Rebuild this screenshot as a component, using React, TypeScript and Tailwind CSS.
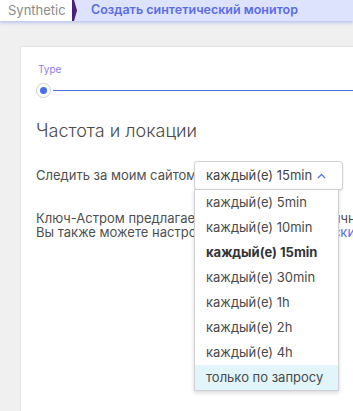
import React from "react";

const items = [
  { label: "каждый(е) 5min" },
  { label: "каждый(е) 10min" },
  { label: "каждый(е) 15min", bold: true },
  { label: "каждый(е) 30min" },
  { label: "каждый(е) 1h" },
  { label: "каждый(е) 2h" },
  { label: "каждый(е) 4h" },
  { label: "только по запросу", hl: true },
];

export default function App() {
  return (
    <div className="w-[353px] h-[411px] overflow-hidden bg-[#f0f0f0] font-['Inter',sans-serif] flex flex-col">
      <div className="relative z-10 flex h-[21px] shrink-0 items-stretch bg-[#dde3fd] shadow-[0_2px_3px_rgba(100,120,235,0.35)]">
        <div className="flex w-[72px] items-center bg-white pl-2 text-[13px] text-[#8a8a8a] leading-none">Synthetic</div>
        <svg width="6" height="21" viewBox="0 0 6 21" className="shrink-0">
          <polygon points="0,0 2,0 5,10.5 2,21 0,21" fill="#4b1f7c" />
        </svg>
        <div className="flex items-center pl-[13px] text-[12.5px] font-semibold text-[#5a6ce4] leading-none whitespace-nowrap">
          Создать синтетический монитор
        </div>
      </div>
      <div className="flex-1 pt-[25px] pl-[20px]">
        <div className="h-full border-l border-t border-[#e4e4e4] bg-white pl-[15px] pt-[16px]">
          <div className="pl-[2px] text-[10px] leading-[12px] text-[#8b7cf0]">Type</div>
          <div className="mt-[8px] flex items-center">
            <div className="flex h-[15px] w-[15px] items-center justify-center rounded-full border border-[#cfcfcf] bg-white">
              <div className="h-[7px] w-[7px] rounded-full bg-[#4a6cf0]" />
            </div>
            <div className="ml-[2px] h-[1.5px] flex-1 bg-[#4c6fe3]" />
          </div>
          <div className="mt-[22px] text-[18px] font-light leading-[22px] text-[#4a4a4a] whitespace-nowrap">Частота и локации</div>
          <div className="mt-[19px] flex items-center">
            <div className="w-[158px] text-[13px] text-[#4f4f4f] whitespace-nowrap">Следить за моим сайтом</div>
            <div className="relative">
              <div className="flex h-[29px] w-[149px] items-center justify-between rounded-[3px] border border-[#d2d2d2] bg-white pl-[11px] pr-[16px] shadow-[0_1px_2px_rgba(0,0,0,0.12)]">
                <span className="text-[13px] text-[#444]">каждый(е) 15min</span>
                <svg width="9" height="6" viewBox="0 0 9 6">
                  <path d="M1 5 L4.5 1.5 L8 5" fill="none" stroke="#5a72e4" strokeWidth="1.3" />
                </svg>
              </div>
              <div className="absolute left-0 top-[28px] z-20 w-[145px] border border-[#d0d0d0] bg-white shadow-[0_2px_4px_rgba(0,0,0,0.15)]">
                {items.map((it) => (
                  <div
                    key={it.label}
                    className={
                      "flex h-[25px] items-center pl-[11px] text-[13px] whitespace-nowrap " +
                      (it.bold ? "font-bold text-[#333] " : "text-[#4a4a4a] ") +
                      (it.hl ? "bg-[#e1f5fa]" : "")
                    }
                  >
                    {it.label}
                  </div>
                ))}
              </div>
            </div>
          </div>
          <div className="mt-[21px] text-[13px] leading-[14px] text-[#4f4f4f] whitespace-nowrap">
            <div>Ключ-Астром предлагает тест сайта с периодичностью 15 минут.</div>
            <div>
              Вы также можете настроить запуск <span className="text-[#5a6ce4]">синтетических тестов по API</span>
            </div>
          </div>
        </div>
      </div>
    </div>
  );
}
